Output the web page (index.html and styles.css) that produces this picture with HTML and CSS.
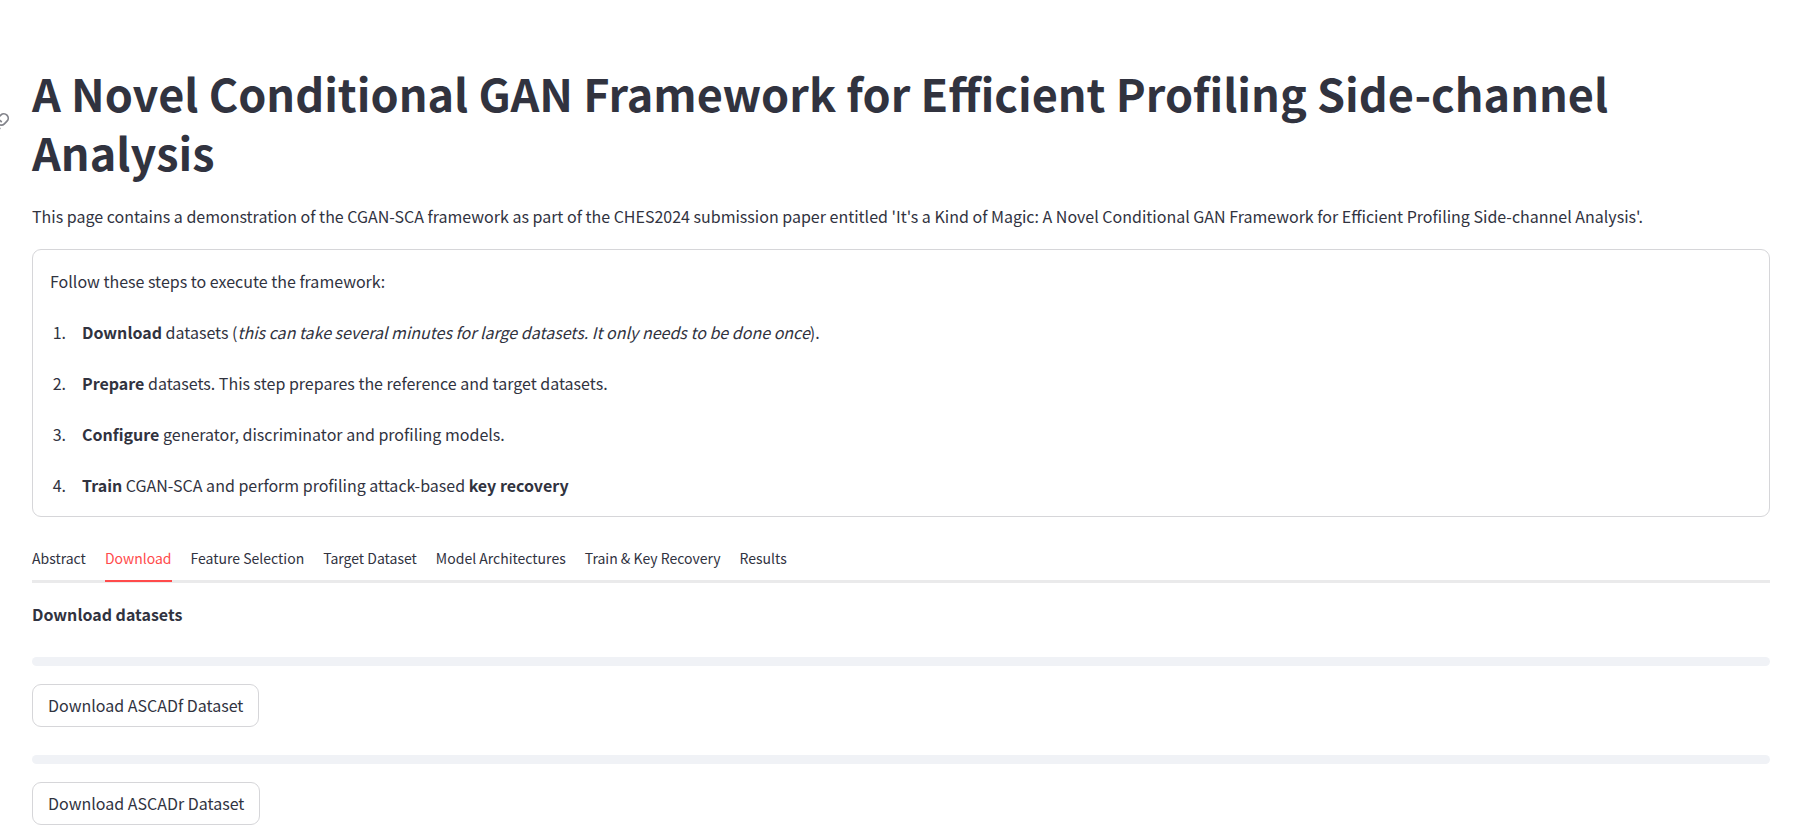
FILE: index.html
```html
<!DOCTYPE html>
<html lang="en">
<head>
<meta charset="utf-8">
<title>A Novel Conditional GAN Framework</title>
<link rel="stylesheet" href="styles.css">
</head>
<body>
<main class="page">
  <h1 class="title" id="title">
    <a class="anchor" href="#title" aria-label="Link to this heading"><svg width="21" height="21" viewBox="0 0 24 24" fill="none" stroke="currentColor" stroke-width="2" stroke-linecap="round" stroke-linejoin="round"><path d="M10 13a5 5 0 0 0 7.54.54l3-3a5 5 0 0 0-7.07-7.07l-1.72 1.71"/><path d="M14 11a5 5 0 0 0-7.54-.54l-3 3a5 5 0 0 0 7.07 7.07l1.71-1.71"/></svg></a>
    A Novel Conditional GAN Framework for Efficient Profiling Side-channel Analysis
  </h1>
  <p class="intro">This page contains a demonstration of the CGAN-SCA framework as part of the CHES2024 submission paper entitled 'It's a Kind of Magic: A Novel Conditional GAN Framework for Efficient Profiling Side-channel Analysis'.</p>
  <section class="steps">
    <p>Follow these steps to execute the framework:</p>
    <ol class="step-list">
      <li><strong>Download</strong> datasets (<em>this can take several minutes for large datasets. It only needs to be done once</em>).</li>
      <li><strong>Prepare</strong> datasets. This step prepares the reference and target datasets.</li>
      <li><strong>Configure</strong> generator, discriminator and profiling models.</li>
      <li><strong>Train</strong> CGAN-SCA and perform profiling attack-based <strong>key recovery</strong></li>
    </ol>
  </section>
  <div class="tabs" role="tablist">
    <button class="tab" role="tab" aria-selected="false">Abstract</button>
    <button class="tab active" role="tab" aria-selected="true">Download</button>
    <button class="tab" role="tab" aria-selected="false">Feature Selection</button>
    <button class="tab" role="tab" aria-selected="false">Target Dataset</button>
    <button class="tab" role="tab" aria-selected="false">Model Architectures</button>
    <button class="tab" role="tab" aria-selected="false">Train &amp; Key Recovery</button>
    <button class="tab" role="tab" aria-selected="false">Results</button>
  </div>
  <section class="panel" role="tabpanel">
    <p><strong>Download datasets</strong></p>
    <div class="dataset">
      <div class="progress" role="progressbar" aria-label="ASCADf download" aria-valuenow="0"></div>
      <button class="button">Download ASCADf Dataset</button>
    </div>
    <div class="dataset">
      <div class="progress" role="progressbar" aria-label="ASCADr download" aria-valuenow="0"></div>
      <button class="button">Download ASCADr Dataset</button>
    </div>
  </section>
</main>
</body>
</html>
```
FILE: styles.css
```css
* { box-sizing: border-box; }
body {
  margin: 0;
  background: #fff;
  color: #31333f;
  font: 16px/29px "Noto Sans CJK SC", "Noto Sans", sans-serif;
}
p, h1, ol { margin: 0; }
button { font: inherit; color: inherit; cursor: pointer; }
strong { font-weight: 600; }
.page { padding: 63px 28px 14px 32px; overflow-x: hidden; }
.title {
  position: relative;
  margin-bottom: 21px;
  font-size: 45px;
  line-height: 59px;
  font-weight: 700;
}
.anchor {
  position: absolute;
  left: -43px;
  top: 49px;
  display: flex;
  color: #83848b;
}
.intro { margin-bottom: 18px; }
.steps {
  padding: 17px 17px 16px;
  border: 1px solid #d6d6d9;
  border-radius: 9px;
}
.step-list {
  display: flex;
  flex-direction: column;
  gap: 22px;
  margin-top: 22px;
  padding-left: 32px;
}
.step-list li::marker { content: counter(list-item) ".\2003"; }
.tabs {
  display: flex;
  gap: 19px;
  margin-top: 30px;
  box-shadow: inset 0 -3px #eaeaeb;
}
.tab {
  padding: 0 0 10px;
  margin-bottom: 1px;
  border: 0;
  border-bottom: 2px solid transparent;
  background: none;
  font-size: 14px;
  line-height: 23px;
  white-space: nowrap;
}
.tab.active { color: #ff4b4b; border-bottom-color: #ff4b4b; }
.panel {
  display: flex;
  flex-direction: column;
  gap: 28px;
  padding-top: 17px;
}
.dataset {
  display: flex;
  flex-direction: column;
  align-items: flex-start;
  gap: 18px;
}
.progress {
  width: 100%;
  height: 9px;
  border-radius: 5px;
  background: #f0f2f6;
}
.button {
  padding: 6px 15px;
  border: 1px solid #d6d6d9;
  border-radius: 9px;
  background: #fff;
}
```
